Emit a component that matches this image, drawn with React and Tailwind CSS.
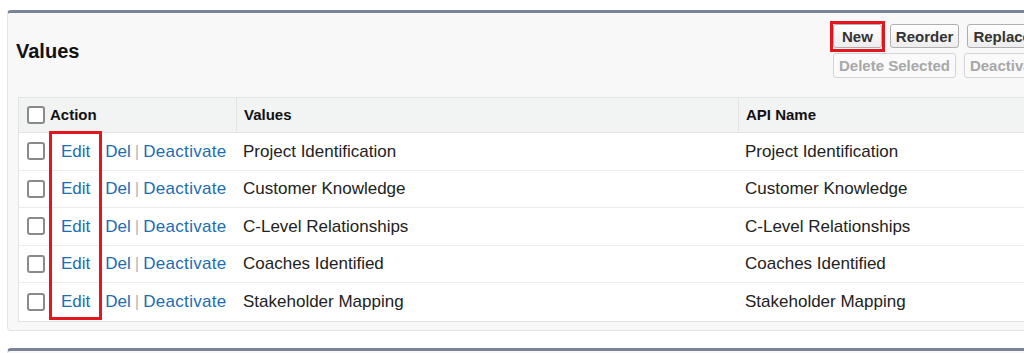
const rows = [
  'Project Identification',
  'Customer Knowledge',
  'C-Level Relationships',
  'Coaches Identified',
  'Stakeholder Mapping',
];

function Checkbox() {
  return (
    <span className="inline-block w-[18px] h-[18px] rounded-[3px] border-2 border-[#8a8a8a] bg-white shrink-0" />
  );
}

function Btn({ children, disabled, wide }) {
  const pad = wide ? ' px-[8px]' : ' px-[5px]';
  return (
    <button
      className={
        (disabled
          ? 'h-[25px] rounded-[3px] border border-[#d4d4d4] bg-[#fafafa] text-[15px] font-bold text-[#a8a8a8] leading-none whitespace-nowrap'
          : 'h-[24px] rounded-[3px] border border-[#b0b0b0] bg-gradient-to-b from-white to-[#ededed] text-[15px] font-bold text-[#333] leading-none whitespace-nowrap') + pad
      }
    >
      {children}
    </button>
  );
}

export default function App() {
  return (
    <div className="w-[1024px] h-[353px] overflow-hidden bg-white pt-[10px] font-['Liberation_Sans',Arial,sans-serif] text-[#222]">
      <div className="ml-[7px] w-[1100px] rounded-[4px] border border-[#e1e3e6] border-t-[3px] border-t-[#7b8399] bg-[#f8f8f8] pb-[8px]">
        {/* Header */}
        <div className="flex items-start h-[84px]">
          <h2 className="pl-[8px] pt-[23px] text-[20px] font-bold text-[#111]">Values</h2>
          <div className="ml-auto mr-[3px] pt-[11px] flex flex-col gap-[4px] w-[270px]">
            <div className="flex items-center gap-[8px]">
              <div className="relative">
                <Btn wide>New</Btn>
                <span className="absolute -left-[3px] -top-[3px] -right-[3px] -bottom-[3px] border-[3px] border-[#e3161d]" />
              </div>
              <Btn>Reorder</Btn>
              <Btn>Replace</Btn>
            </div>
            <div className="flex items-center gap-[8px]">
              <Btn disabled>Delete Selected</Btn>
              <Btn disabled>Deactivate Selected</Btn>
            </div>
          </div>
        </div>

        {/* Table */}
        <div className="relative ml-[10px] border border-[#e1e3e6] bg-white">
          <div className="flex h-[35px] bg-[#f2f3f3] border-b border-[#e3e3e3] text-[15px] font-bold text-[#111]">
            <div className="w-[217px] flex items-center gap-[5px] pl-[8px]">
              <Checkbox />
              <span>Action</span>
            </div>
            <div className="w-[502px] flex items-center pl-[7px] border-l border-[#e3e3e3]">Values</div>
            <div className="flex-1 flex items-center pl-[7px] border-l border-[#e3e3e3]">API Name</div>
          </div>
          {rows.map((r, i) => (
            <div
              key={r}
              className={
                'flex h-[37.6px] text-[17px] ' + (i < rows.length - 1 ? 'border-b border-[#ebebeb]' : '')
              }
            >
              <div className="w-[217px] flex items-center pl-[8px]">
                <Checkbox />
                <a className="ml-[16px] text-[#1b6cb4]">Edit</a>
                <a className="ml-[15px] text-[#1b6cb4]">Del</a>
                <span className="mx-[4px] text-[#b8b8b8]">|</span>
                <a className="tracking-[0.3px] text-[#1b6cb4]">Deactivate</a>
              </div>
              <div className="w-[502px] flex items-center pl-[7px]">{r}</div>
              <div className="flex-1 flex items-center pl-[7px]">{r}</div>
            </div>
          ))}
          <span className="absolute left-[30px] top-[33px] w-[53px] h-[189px] border-[3px] border-[#e3161d]" />
        </div>
      </div>
      <div className="mt-[17px] ml-[7px] w-[1100px] h-[20px] rounded-[4px] border border-[#e1e3e6] border-t-[3px] border-t-[#7b8399] bg-[#f8f8f8]" />
    </div>
  );
}
